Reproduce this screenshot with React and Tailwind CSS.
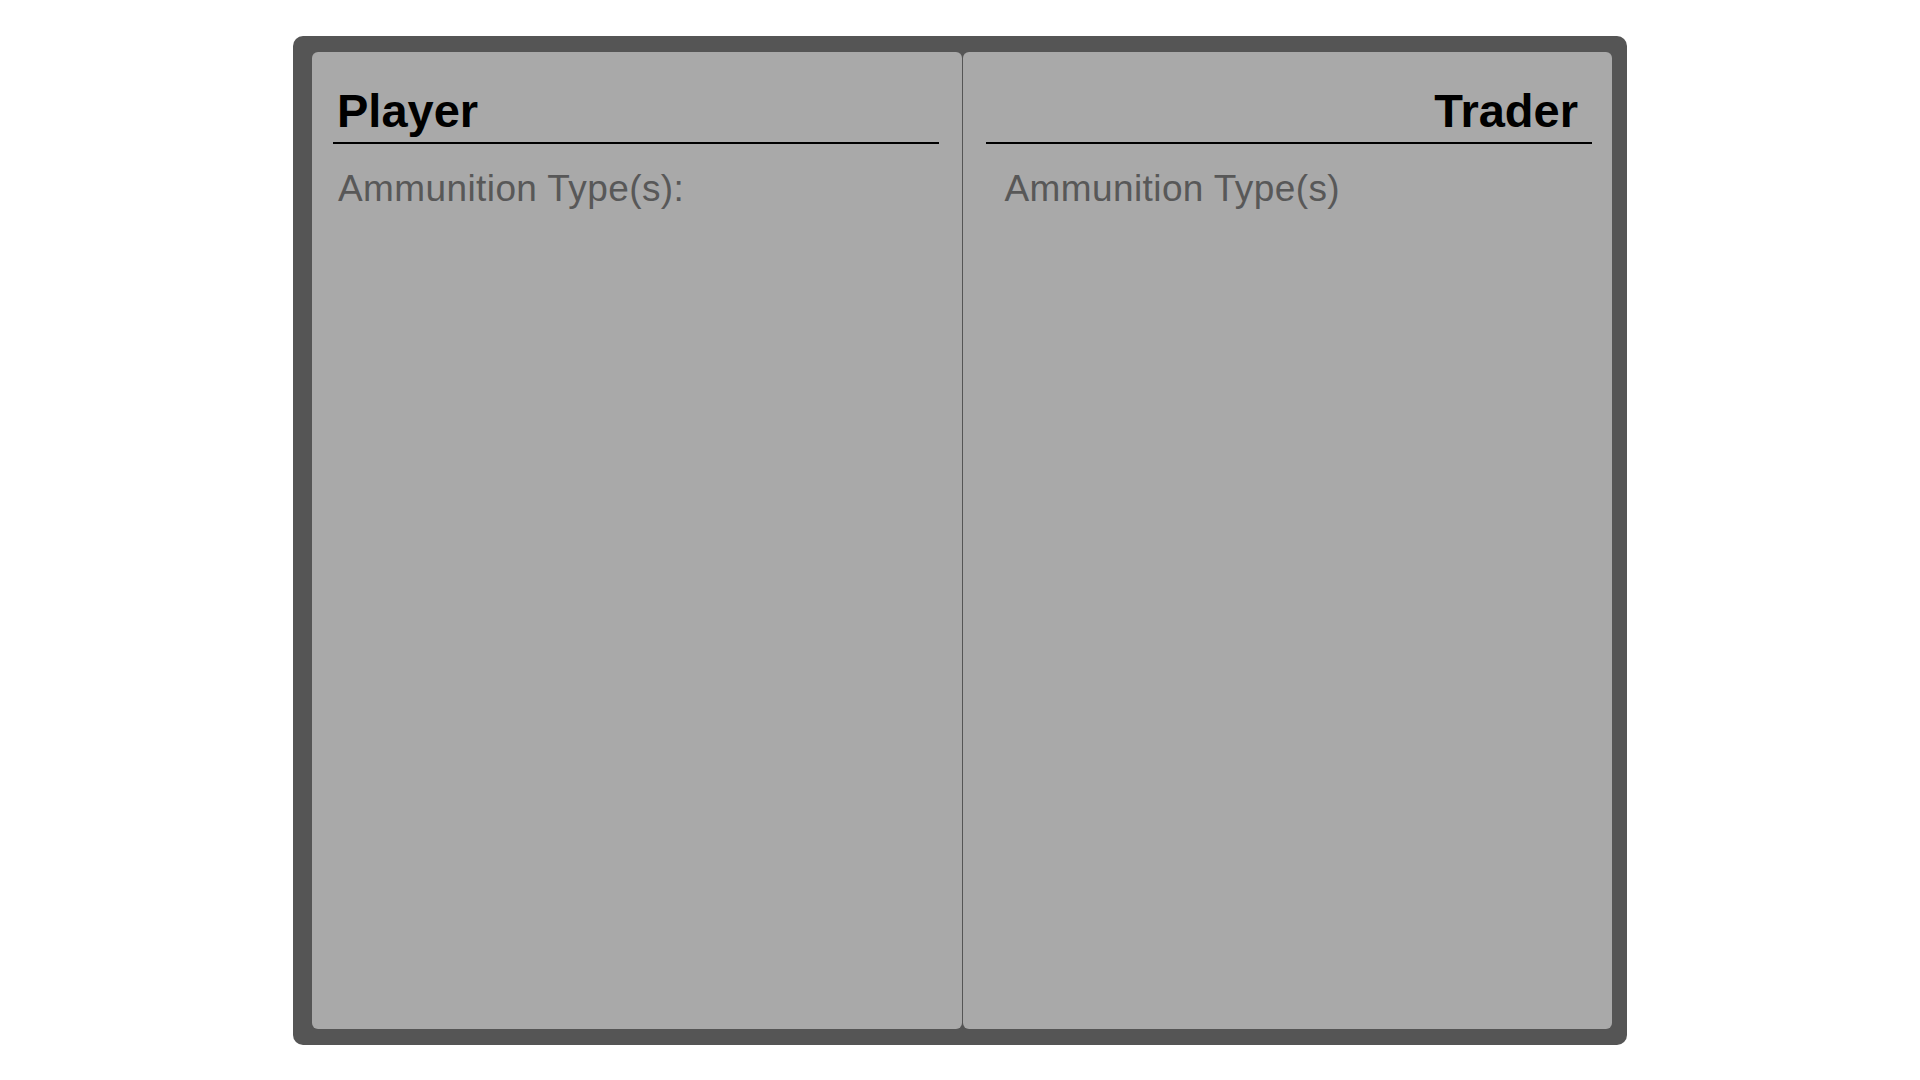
function Panel({ title, subtitle, align }) {
  const right = align === 'right';
  return (
    <div className="flex-1 bg-[#a9a9a9] rounded-[6px] pt-[35px]">
      <div
        className={`border-b-2 border-black pb-[8px] ${
          right ? 'ml-[23px] mr-[20px] pr-[14px] text-right' : 'ml-[21px] mr-[23px] pl-[4px]'
        }`}
      >
        <h2 className="text-[47px] leading-none font-bold text-black">{title}</h2>
      </div>
      <p
        className={`mt-[26px] text-[37px] leading-none tracking-[0.4px] text-[#585858] ${
          right ? 'pl-[42px]' : 'pl-[26px]'
        }`}
      >
        {subtitle}
      </p>
    </div>
  );
}

export default function App() {
  return (
    <div
      className="min-h-screen flex items-center justify-center bg-white"
      style={{ fontFamily: '"Liberation Sans", Arial, sans-serif' }}
    >
      <div className="w-[1334px] h-[1009px] bg-[#555555] rounded-[10px] pl-[19px] pr-[15px] py-[16px] flex gap-px">
        <Panel title="Player" subtitle="Ammunition Type(s):" />
        <Panel title="Trader" subtitle="Ammunition Type(s)" align="right" />
      </div>
    </div>
  );
}
